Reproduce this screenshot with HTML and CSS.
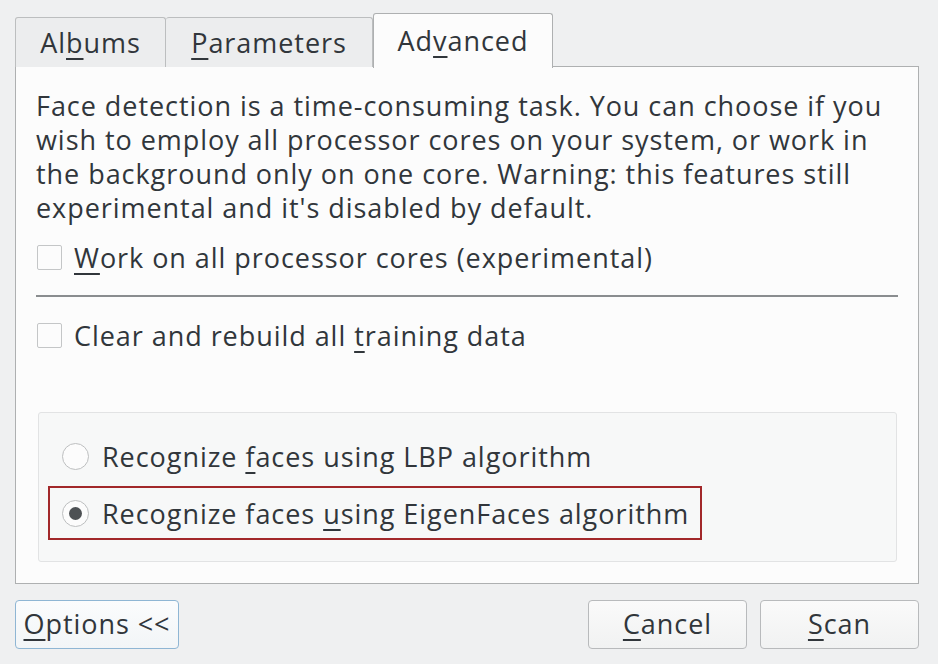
FILE: index.html
```html
<!DOCTYPE html>
<html>
<head>
<meta charset="utf-8">
<link rel="stylesheet" href="styles.css">
</head>
<body>
<div class="dialog">
  <div class="tabs">
    <div class="tab t1">Al<u>b</u>ums</div>
    <div class="tab t2"><u>P</u>arameters</div>
    <div class="tab t3 active">Ad<u>v</u>anced</div>
  </div>
  <div class="panel">
    <p class="para">Face detection is a time-consuming task. You can choose if you<br>wish to employ all processor cores on your system, or work in<br>the background only on one core. Warning: this features still<br>experimental and it's disabled by default.</p>
    <div class="check row1"><span class="box"></span><span class="lbl"><u>W</u>ork on all processor cores (experimental)</span></div>
    <div class="sep"></div>
    <div class="check row2"><span class="box"></span><span class="lbl">Clear and rebuild all <u>t</u>raining data</span></div>
    <div class="group">
      <div class="radio r1"><span class="dot"></span><span class="lbl">Recognize <u>f</u>aces using LBP algorithm</span></div>
      <div class="radio r2 focus"><span class="dot on"></span><span class="lbl">Recognize faces <u>u</u>sing EigenFaces algorithm</span></div>
    </div>
  </div>
  <div class="buttons">
    <div class="btn options"><u>O</u>ptions &lt;&lt;</div>
    <div class="spacer"></div>
    <div class="btn cancel"><u>C</u>ancel</div>
    <div class="btn scan"><u>S</u>can</div>
  </div>
</div>
</body>
</html>
```
FILE: styles.css
```css
html, body {
  margin: 0;
  padding: 0;
  background: #eff0f1;
}
body {
  width: 938px;
  height: 664px;
  overflow: hidden;
  font-family: "Open Sans", "Noto Sans", sans-serif;
  font-size: 27px;
  letter-spacing: 0.95px;
  color: #31363b;
}
u {
  text-decoration: underline;
  text-decoration-thickness: 2px;
  text-underline-offset: 5px;
}
.dialog {
  padding: 13px 19px 0 15px;
}
.tabs {
  display: flex;
  align-items: flex-end;
  height: 54px;
  position: relative;
  z-index: 2;
}
.tab {
  box-sizing: border-box;
  height: 50px;
  border: 1px solid #bcbebf;
  border-bottom: none;
  background: #ecedee;
  border-radius: 3px 3px 0 0;
  display: flex;
  align-items: center;
  justify-content: center;
  padding-bottom: 0;
}
.t1 { width: 151px; }
.t2 { width: 207px; border-left: none; }
.t3 { width: 180px; }
.tab.active {
  height: 55px;
  background: #fcfcfc;
  border-color: #aeb0b1;
  margin-bottom: -1px;
  padding-bottom: 1px;
}
.panel {
  box-sizing: border-box;
  height: 518px;
  border: 1px solid #aeb0b1;
  background: #fcfcfc;
  padding: 0 20px;
  margin-top: -1px;
  display: flex;
  flex-direction: column;
}
.para {
  margin: 22px 0 0 0;
  line-height: 34px;
}
.check {
  display: flex;
  align-items: center;
  height: 34px;
}
.row1 { margin-top: 15px; }
.row2 { margin-top: 21px; }
.box {
  box-sizing: border-box;
  width: 25px;
  height: 25px;
  border: 1px solid #c4c6c7;
  background: #fcfcfc;
  border-radius: 2px;
  margin-left: 1px;
  margin-right: 12px;
}
.sep {
  height: 2px;
  background: #8a8d8f;
  margin-top: 21px;
}
.group {
  box-sizing: border-box;
  margin: 60px 1px 0 2px;
  height: 150px;
  border: 1px solid #e2e3e4;
  border-radius: 3px;
  background: #f7f8f8;
  padding: 16px 0 0 9px;
  display: flex;
  flex-direction: column;
  align-items: flex-start;
}
.radio {
  box-sizing: border-box;
  display: flex;
  align-items: center;
  height: 54px;
  padding: 0 11px 0 12px;
  border: 2px solid transparent;
}
.radio.focus {
  border-color: #a2282a;
  margin-top: 3px;
}
.dot {
  box-sizing: border-box;
  width: 27px;
  height: 27px;
  border: 1px solid #bdbfc0;
  border-radius: 50%;
  background: #fcfcfc;
  margin-right: 13px;
  display: flex;
  align-items: center;
  justify-content: center;
}
.dot.on::after {
  content: "";
  width: 13px;
  height: 13px;
  border-radius: 50%;
  background: #4d5154;
}
.buttons {
  display: flex;
  margin-top: 16px;
  align-items: center;
}
.spacer { flex: 1; }
.btn {
  box-sizing: border-box;
  height: 49px;
  border: 1px solid #b8babc;
  border-radius: 4px;
  background: linear-gradient(#fafafa, #f1f2f2);
  display: flex;
  align-items: center;
  justify-content: center;
  padding-bottom: 2px;
}
.options {
  width: 164px;
  border-color: #8fb6d4;
  background: linear-gradient(#fbfcfd, #f2f5f7);
}
.cancel { width: 159px; margin-right: 13px; }
.scan { width: 159px; }
```
